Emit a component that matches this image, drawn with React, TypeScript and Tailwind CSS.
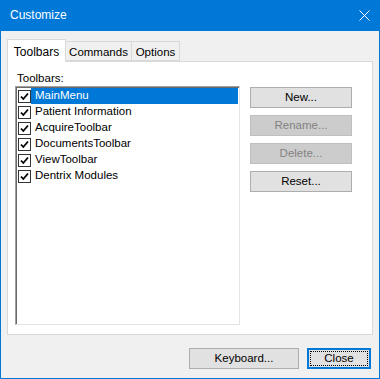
import React from "react";

const items = [
  "MainMenu",
  "Patient Information",
  "AcquireToolbar",
  "DocumentsToolbar",
  "ViewToolbar",
  "Dentrix Modules",
];

function Check() {
  return (
    <span className="w-[13px] h-[13px] border border-[#333333] bg-white flex items-center justify-center shrink-0">
      <svg width="9" height="9" viewBox="0 0 9 9">
        <path d="M1 4.5 L3.3 7 L8 1.5" stroke="#000" strokeWidth="1.8" fill="none" />
      </svg>
    </span>
  );
}

function Btn({ label, disabled }: { label: string; disabled?: boolean }) {
  return (
    <div
      className={
        "w-[102px] h-[21px] border flex items-center justify-center " +
        (disabled
          ? "bg-[#cccccc] border-[#bfbfbf] text-[#838383]"
          : "bg-[#e1e1e1] border-[#adadad] text-black")
      }
    >
      {label}
    </div>
  );
}

export default function App() {
  return (
    <div
      className="w-[380px] h-[379px] bg-[#0078d7] flex flex-col px-px pb-px text-[11.5px] text-black"
      style={{ fontFamily: '"Liberation Sans", Arial, sans-serif' }}
    >
      <div className="h-[31px] flex items-center justify-between pl-[9px] pr-[9px] text-white text-[12px] shrink-0">
        <span className="-mt-px">Customize</span>
        <svg width="11" height="11" viewBox="0 0 11 11" className="-mt-px">
          <path d="M0.5 0.5 L10.5 10.5 M10.5 0.5 L0.5 10.5" stroke="#fff" strokeWidth="1" />
        </svg>
      </div>
      <div className="flex-1 bg-[#f0f0f0] flex flex-col pt-[8px]">
        <div className="flex items-end h-[22px] pl-[6px]">
          <div className="relative z-10 w-[59px] h-[23px] -mb-px bg-white border border-b-0 border-[#d9d9d9] flex justify-center pt-[3px] text-[12px]">
            Toolbars
          </div>
          <div className="w-[66px] h-[20px] border border-l-0 border-[#d9d9d9] bg-[#f0f0f0] flex justify-center pt-[2px]">
            Commands
          </div>
          <div className="w-[48px] h-[20px] border border-l-0 border-[#d9d9d9] bg-[#f0f0f0] flex justify-center pt-[2px]">
            Options
          </div>
        </div>
        <div className="mx-[6px] h-[274px] bg-white border border-[#d9d9d9] flex flex-col">
          <div className="pl-[9px] mt-[8px] h-[16px] leading-[16px]">Toolbars:</div>
          <div className="flex pl-[7px]">
            <div className="w-[225px] h-[239px] border border-t-[#a0a0a0] border-l-[#a0a0a0] border-r-[#e3e3e3] border-b-[#e3e3e3] shadow-[inset_1px_1px_0_#696969] pt-[1px] pl-[1px]">
              {items.map((t, i) => (
                <div key={t} className="h-[16px] flex items-center">
                  <div className="w-[14px] flex items-center justify-end">
                    <Check />
                  </div>
                  <div
                    className={
                      "flex-1 h-[16px] leading-[15px] pl-[4px] mr-px " +
                      (i === 0 ? "bg-[#0078d7] text-white" : "")
                    }
                  >
                    {t}
                  </div>
                </div>
              ))}
            </div>
            <div className="flex flex-col gap-[7px] ml-[10px] mt-px">
              <Btn label="New..." />
              <Btn label="Rename..." disabled />
              <Btn label="Delete..." disabled />
              <Btn label="Reset..." />
            </div>
          </div>
        </div>
        <div className="flex justify-end gap-[8px] pr-[8px] mt-[13px]">
          <div className="w-[110px] h-[21px] bg-[#e1e1e1] border border-[#adadad] flex items-center justify-center">
            Keyboard...
          </div>
          <div className="relative w-[64px] h-[21px] bg-[#e1e1e1] border-2 border-[#0078d7] flex items-center justify-center">
            <span className="absolute inset-[1px] border border-dotted border-black" />
            Close
          </div>
        </div>
      </div>
    </div>
  );
}
